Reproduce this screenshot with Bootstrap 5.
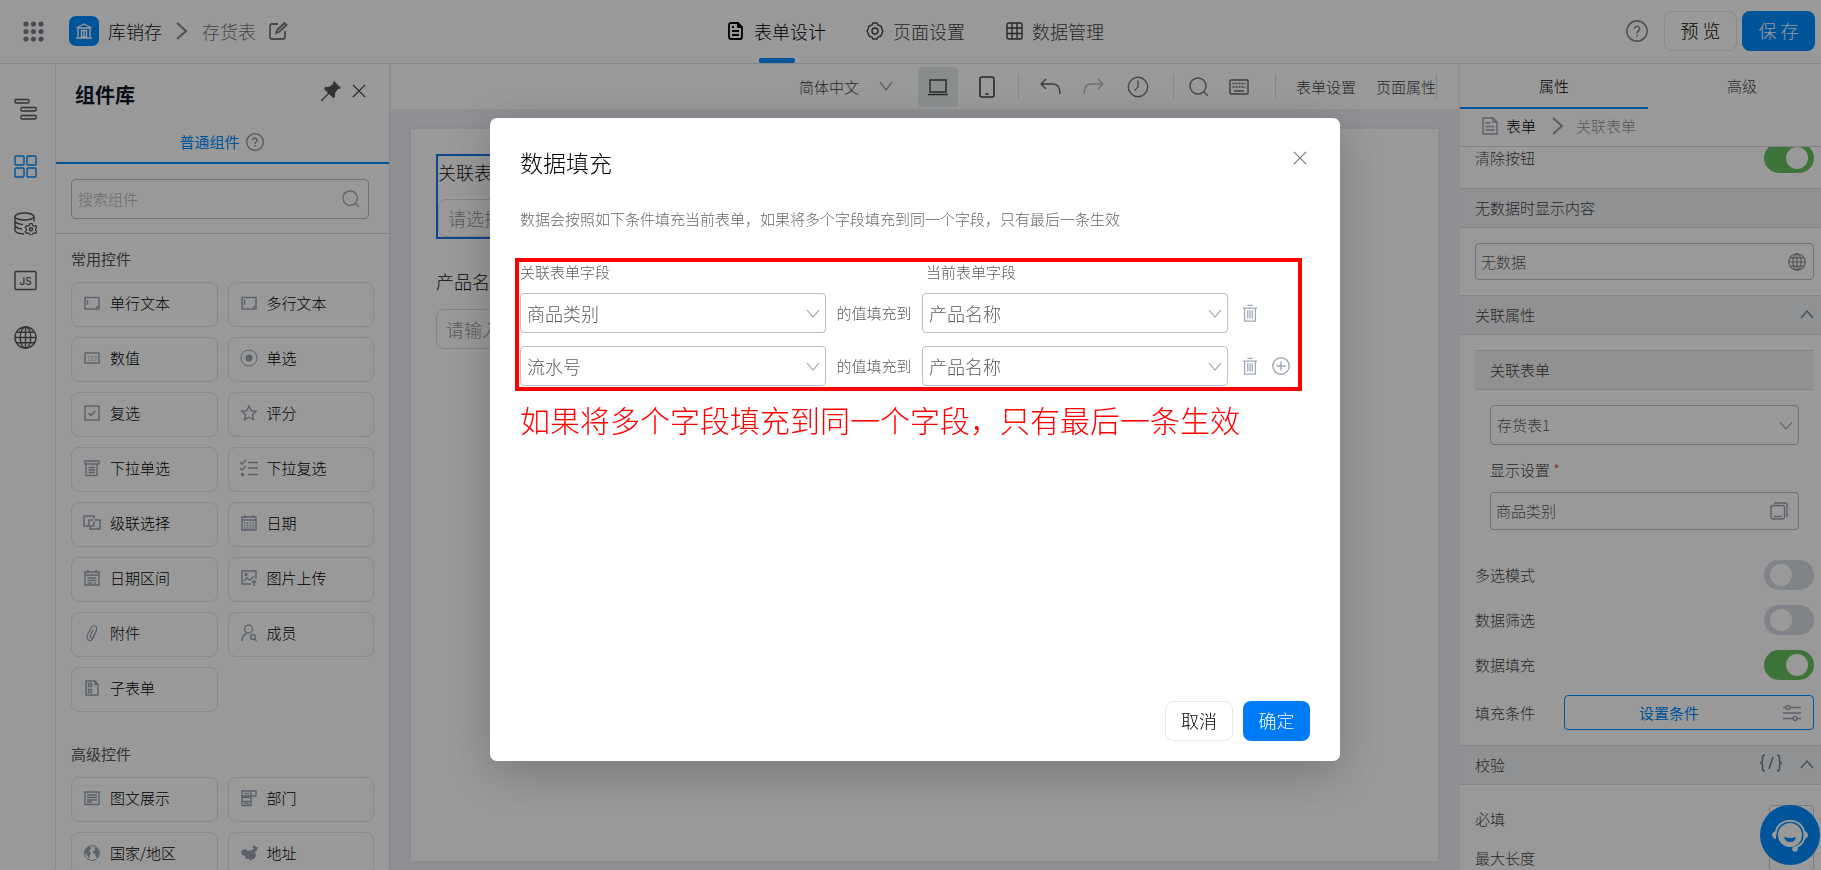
<!DOCTYPE html>
<html lang="zh-CN">
<head>
<meta charset="utf-8">
<meta name="viewport" content="width=device-width, initial-scale=1">
<title>表单设计</title>
<link href="https://cdn.jsdelivr.net/npm/bootstrap@5.3.0/dist/css/bootstrap.min.css" rel="stylesheet">
<style>
:root { --blue: #008cff; --line: #e2e3e5; --field: #b9c0cb; --muted: #5c5c5c; --icon: #9aa3b0; }
body { font-family: "Noto Sans CJK SC", sans-serif; font-size: 15px; line-height: 20px; color: #111; font-weight: 300; stroke-width: 1.4; }
svg { fill: none; stroke: currentColor; flex: none; display: block; }
.t18 { font-size: 18px; line-height: 24px; }
.btn { --bs-btn-font-weight: 300; font-size: 18px; line-height: 24px; height: 40px; border-radius: 8px; padding: 0 0 2px; }
.btn-bare { background: none; border: 0; padding: 0; color: inherit; font-weight: 300; }
.btn-line { border: 1px solid #e6e6e6; color: #000; background: #fff; }
.btn-top { width: 73px; }
.btn-blue { background: var(--blue); color: #fff; }
a { color: inherit; text-decoration: none; }
.app { height: 100vh; overflow: hidden; }
.topbar { height: 64px; border-bottom: 1px solid var(--line); padding: 0 6px 2px 21px; }
.topbar .side { flex: 1 1 0; }
.logo { width: 30px; height: 30px; border-radius: 7px; background: var(--blue); color: #fff; }
.crumb-gap { margin-left: 14px; }
.main-nav { gap: 40px; height: 61px; padding-right: 5px; }
.main-nav a { color: #444; height: 61px; gap: 9px; position: relative; }
.main-nav a.active { color: #000; }
.main-nav a.active::after { content: ""; position: absolute; bottom: -2px; left: calc(50% - 18px); width: 36px; height: 5px; border-radius: 2px; background: var(--blue); }
.rail { width: 56px; border-right: 1px solid #dfe2e6; padding: 34px 4px 0 0; gap: 34px; color: #555; }
.rail .on { color: var(--blue); }
.library { width: 333px; }
.library h2 { font-size: 20px; line-height: 28px; font-weight: 700; color: #10182c; }
.library-head { height: 62px; padding: 0 23px 0 19px; }
.lib-tab { height: 38px; border-bottom: 2px solid var(--blue); color: var(--blue); gap: 6px; padding-right: 2px; font-weight: 400; }
.search-wrap { padding: 15px 20px 14px 15px; border-bottom: 1px solid #dcdcdc; }
.field { border: 1px solid var(--field); border-radius: 4px; background-color: #fff; color: var(--muted); font-weight: 300; font-size: 15px; line-height: 20px; box-shadow: none; }
.field input { border: 0; outline: 0; background: none; color: inherit; font: inherit; padding: 0; min-width: 0; flex: 1; }
.field input::placeholder { color: #b0b6c0; opacity: 1; }
.parts { padding: 0 15px; }
.parts h3 { font-size: 15px; line-height: 20px; font-weight: 400; color: #555; margin: 0 0 13px; }
.part-grid { display: grid; grid-template-columns: 1fr 1fr; gap: 10px; }
.part { height: 45px; border: 1px solid #e2e4e6; border-radius: 8px; background: #fff; padding: 0 0 3px 11px; gap: 9px; color: #000; font-weight: 300; text-align: left; }
.part svg { color: var(--icon); }
.stage { background: #eef0f5; border-left: 2px solid #e6e8ec; }
.toolbar { height: 45px; background: #fff; color: #444; padding-right: 21px; border-right: 2px solid #eee; }
.tool { width: 40px; height: 40px; border-radius: 4px; display: flex; align-items: center; justify-content: center; }
.tool.on { background: #e7eced; }
.vr-line { width: 1px; height: 25px; background: #e0e0e0; }
.paper { margin: 20px 22px 9px 20px; background: #fff; box-shadow: 0 0 4px #dfe2ea; padding: 25px; }
.picked { border: 2px solid #1677ee; padding-top: 4px; margin-bottom: 30px; }
.picked .blank-field { height: 38px; }
.blank-field { height: 40px; border: 1px solid #dedede; border-radius: 8px; padding: 0 9px; width: 100%; font-size: 18px; font-weight: 300; background: #fff; }
.blank-field::placeholder { color: #999; opacity: 1; }
.props { width: 361px; color: #444; }
.props-tab { width: 188px; height: 45px; flex: none; border-bottom: 2px solid transparent; color: #444; }
.props-tab.active { color: #000; border-bottom: 2px solid var(--blue); }
.crumb { height: 38px; border-bottom: 1px solid #dcdcdc; padding: 0 0 3px 22px; }
.sect { height: 40px; background: #f0f2f5; border: solid #dcdee2; border-width: 1px 0; padding: 0 7px 0 15px; }
.row-line { padding: 0 7px 0 15px; }
.form-switch .form-check-input { width: 50px; height: 30px; margin: 0; border: 0; box-shadow: none; background-color: #d5dae3; background-size: 22px 22px; background-position: 6px center; transition: none;
  background-image: url("data:image/svg+xml,%3Csvg xmlns='http://www.w3.org/2000/svg' viewBox='0 0 22 22'%3E%3Ccircle cx='11' cy='11' r='11' fill='%23fff'/%3E%3C/svg%3E"); }
.form-switch .form-check-input:checked { background-color: #67c25f; background-position: 22px center; }
.sel { height: 40px; background-image: url("data:image/svg+xml,%3Csvg xmlns='http://www.w3.org/2000/svg' viewBox='0 0 14 14' fill='none' stroke='%23999'%3E%3Cpath d='M1 4l6 7 6-7' stroke-width='1.1'/%3E%3C/svg%3E"); background-size: 14px 14px; background-position: right 5px center; background-repeat: no-repeat; padding: 0 24px 1px 6px; }
.corner { width: 45px; height: 27px; border: 1px solid #ccd; border-radius: 3px; }
.chat { position: fixed; right: 1px; bottom: 5px; width: 60px; height: 60px; background: var(--blue); color: #fff; border: 0; border-radius: 50%; padding: 0; z-index: 10; display: flex; align-items: center; justify-content: center; }
.modal-backdrop { --bs-backdrop-opacity: .4; }
.modal { padding-left: 9px; }
.modal-dialog { max-width: 850px; margin: 118px auto 0; }
.modal-content { border: 0; border-radius: 7px; min-height: 643px; padding: 20px 30px; box-shadow: 0 12px 48px rgba(0,0,0,.22); color: #111; }
.modal-title { font-size: 23px; line-height: 32px; font-weight: 300; color: #000; }
.fill-box { border: 4px solid #f00; margin: 0 8px 0 -5px; padding: 0 1px 1px; color: var(--muted); }
.fill-row { margin-bottom: 13px; }
.fill-row:last-child { margin-bottom: 0; }
.fill-row .sel { width: 306px; font-size: 18px; line-height: 24px; flex: none; }
.fill-row .btn-bare { color: #9fa8b6; margin-left: 14px; }
.mid-label { width: 96px; text-align: center; flex: none; }
.note { font-size: 30px; line-height: 40px; color: #f00; font-weight: 300; }
</style>
</head>
<body>
<svg width="0" height="0" class="position-absolute" aria-hidden="true">
  <symbol id="question" viewBox="0 0 20 20"><circle cx="10" cy="10" r="9.2"/><path d="M7.6 8a2.4 2.4 0 1 1 3.8 2c-1 .7-1.4 1-1.4 2M10 13.4v1.6"/></symbol>
  <symbol id="magnifier" viewBox="0 0 20 20"><circle cx="9" cy="9" r="8"/><path d="M14.8 14.8l4 4"/></symbol>
  <symbol id="globe" viewBox="0 0 24 24"><circle cx="12" cy="12" r="11"/><ellipse cx="12" cy="12" rx="5.5" ry="11"/><path d="M12 1v22M1 12h22M3 6.5h18M3 17.5h18"/></symbol>
  <symbol id="cross" viewBox="0 0 16 16"><path d="M1 1l14 14M15 1L1 15"/></symbol>
  <symbol id="up" viewBox="0 0 14 14"><path d="M1 10l6-7 6 7"/></symbol>
  <symbol id="right" viewBox="0 0 12 18"><path d="M1 1l9 8-9 8"/></symbol>
  <symbol id="trash" viewBox="0 0 16 20"><path d="M0 4.5h16M5 1.5h6M2 4.5V19h12V4.5M5.500 7v9M8 7v9M10.500 7v9"/></symbol>
</svg>

<div class="app d-flex flex-column">
  <header class="topbar d-flex align-items-center flex-shrink-0">
    <div class="side d-flex align-items-center t18">
      <svg width="24" height="24" viewBox="0 0 24 24" style="color:#7a8088"><g fill="currentColor" stroke="none"><circle cx="5" cy="5" r="2.600"/><circle cx="12.500" cy="5" r="2.600"/><circle cx="20" cy="5" r="2.600"/><circle cx="5" cy="12.500" r="2.600"/><circle cx="12.500" cy="12.500" r="2.600"/><circle cx="20" cy="12.500" r="2.600"/><circle cx="5" cy="20" r="2.600"/><circle cx="12.500" cy="20" r="2.600"/><circle cx="20" cy="20" r="2.600"/></g></svg>
      <span class="logo d-flex align-items-center justify-content-center ms-4"><svg width="18" height="18" viewBox="0 0 18 18"><path d="M1.500 6L9 2l7.500 4zM3 7v8M15 7v8M1 16h16M6.500 8.500h5V15h-5zM9 8.500V15"/></svg></span>
      <span style="margin-left:9px">库销存</span>
      <svg class="crumb-gap" width="12" height="18" stroke-width="2" style="color:#7f858d"><use href="#right"/></svg>
      <span class="crumb-gap" style="color:#777">存货表</span>
      <button class="btn-bare ms-2 ps-1" aria-label="编辑" style="color:#777"><svg width="20" height="20" viewBox="0 0 20 20" stroke-width="1.800"><path d="M10 3H4Q2 3 2 5v11q0 2 2 2h11q2 0 2-2v-6M8 12l1-3 7.500-7 2 2L11 11z"/></svg></button>
    </div>
    <nav class="main-nav d-flex t18">
      <a href="#" class="active d-flex align-items-center"><svg width="18" height="18" viewBox="0 0 18 18" stroke-width="1.800"><path d="M2 3q0-2 2-2h7l4 4v10q0 2-2 2H4q-2 0-2-2zM5 9h7M5 13h7M5 5h2M11 1v4h4"/></svg>表单设计</a>
      <a href="#" class="d-flex align-items-center"><svg width="18" height="18" viewBox="0 0 18 18"><path d="M7 1h4l1 2 3 1 1 3 1 2-1 2-1 3-3 1-1 2H7l-1-2-3-1-1-3-1-2 1-2 1-3 3-1z"/><circle cx="9" cy="9" r="3"/></svg>页面设置</a>
      <a href="#" class="d-flex align-items-center"><svg width="18" height="18" viewBox="0 0 18 18"><rect x="2" y="1" width="15" height="16" rx="2"/><path d="M2 6h15M2 11.500h15M7 1v16M12 1v16"/></svg>数据管理</a>
    </nav>
    <div class="side d-flex align-items-center justify-content-end">
      <button class="btn-bare" aria-label="帮助" style="color:#888"><svg width="22" height="22"><use href="#question"/></svg></button>
      <button class="btn btn-line btn-top ms-3">预 览</button>
      <button class="btn btn-blue btn-top" style="margin-left:5px">保 存</button>
    </div>
  </header>

  <div class="d-flex flex-fill" style="min-height:0">
    <aside class="rail d-flex flex-column align-items-center flex-shrink-0">
      <svg width="23" height="23" viewBox="0 0 23 23"><rect x="1" y="1.500" width="14" height="3.500" rx="1"/><rect x="7" y="9.500" width="15" height="3.500" rx="1"/><rect x="7" y="17.500" width="15" height="3.500" rx="1"/></svg>
      <svg class="on" width="23" height="23" viewBox="0 0 23 23"><rect x="1" y="1" width="9" height="9" rx="1"/><rect x="13" y="1" width="9" height="9" rx="1"/><rect x="1" y="13" width="9" height="9" rx="1"/><rect x="13" y="13" width="9" height="9" rx="1"/></svg>
      <svg width="23" height="23" viewBox="0 0 23 23"><ellipse cx="10.500" cy="4.500" rx="9.500" ry="3.500"/><path d="M1 4.500v14q1 3 9 3.500M20 4.500v5M1 9.500q2 2.500 8 3M1 14q2 2.500 7 3"/><path stroke-width="1.200" d="M16 11.500h2l.6 1.800 1.400.7 1.800-.4 1 1.800-1.300 1.300v1.600l1.300 1.300-1 1.800-1.800-.4-1.400.7-.6 1.300h-2l-.6-1.300-1.400-.7-1.800.4-1-1.800 1.300-1.300v-1.600l-1.300-1.300 1-1.800 1.800.4 1.400-.7z"/><circle cx="17" cy="17.300" r="1.500"/></svg>
      <svg width="23" height="23" viewBox="0 0 23 23"><rect x="1" y="2.500" width="21" height="18" rx="1"/><text x="11.500" y="15.500" text-anchor="middle" font-size="10" font-family="Inter" font-weight="500" fill="currentColor" stroke="none">JS</text></svg>
      <svg width="23" height="23"><use href="#globe"/></svg>
    </aside>

    <aside class="library flex-shrink-0 overflow-hidden">
      <div class="library-head d-flex align-items-center">
        <h2 class="m-0 flex-fill">组件库</h2>
        <button class="btn-bare pb-2" aria-label="固定" style="color:#555"><svg width="20" height="20" viewBox="0 0 20 20"><path fill="currentColor" stroke="none" d="M13 0l7 7-2 1-1 0-3 4 0 4-2 1-4-4-7 7-1 0 0-1 7-7-4-4 1-2 4 0 4-3 0-1z"/></svg></button>
        <button class="btn-bare pb-2" aria-label="关闭" style="margin-left:11px;color:#444"><svg width="14" height="14" stroke-width="1.600"><use href="#cross"/></svg></button>
      </div>
      <div class="lib-tab d-flex justify-content-center align-items-center pb-1">普通组件 <svg width="18" height="18" style="color:#888"><use href="#question"/></svg></div>
      <div class="search-wrap">
        <label class="field d-flex align-items-center" style="height:40px;padding:0 8px 0 6px">
          <input type="search" placeholder="搜索组件" aria-label="搜索组件">
          <svg width="18" height="18" style="color:var(--icon)"><use href="#magnifier"/></svg>
        </label>
      </div>
      <section class="parts" style="padding-top:15px">
        <h3>常用控件</h3>
        <div class="part-grid">
          <button class="part d-flex align-items-center"><svg width="18" height="18" viewBox="0 0 18 18"><rect x="2" y="3.500" width="14" height="11.500"/><path d="M4.500 6v5M13 14l2-2"/></svg>单行文本</button>
          <button class="part d-flex align-items-center"><svg width="18" height="18" viewBox="0 0 18 18"><rect x="2" y="3.500" width="14" height="11.500"/><path d="M4.500 6v5M13 14l2-2"/></svg>多行文本</button>
          <button class="part d-flex align-items-center"><svg width="18" height="18" viewBox="0 0 18 18"><rect x="2" y="4" width="14" height="10"/><text x="9" y="11.500" text-anchor="middle" font-size="6" font-family="Inter" fill="currentColor" stroke="none">123</text></svg>数值</button>
          <button class="part d-flex align-items-center"><svg width="18" height="18" viewBox="0 0 18 18"><circle cx="9" cy="9" r="8" stroke-width="1"/><circle cx="9" cy="9" r="3.500" fill="currentColor" stroke="none"/></svg>单选</button>
          <button class="part d-flex align-items-center"><svg width="18" height="18" viewBox="0 0 18 18"><rect x="2" y="2" width="14" height="14"/><path d="M5.500 9l2.500 2.500L12.500 7"/></svg>复选</button>
          <button class="part d-flex align-items-center"><svg width="18" height="18" viewBox="0 0 18 18"><path d="M9 2l2.200 4.600 5 .6-3.700 3.400 1 5L9 13.200l-4.500 2.400 1-5L1.800 7.200l5-.6z"/></svg>评分</button>
          <button class="part d-flex align-items-center"><svg width="18" height="18" viewBox="0 0 18 18"><path d="M2 2h14v3H2zM3 5v11.500h11V5M5.500 8.500h6.500M5.500 11h6.500M5.500 13.500h6.500"/></svg>下拉单选</button>
          <button class="part d-flex align-items-center"><svg width="18" height="18" viewBox="0 0 18 18"><path d="M0 3l2 2 4-4M0 9l2 2 4-4M8 3.500h10M8 9h10M8 15.500h10"/><path d="M1 14h3v3H1z" fill="currentColor" stroke="none"/></svg>下拉复选</button>
          <button class="part d-flex align-items-center"><svg width="18" height="18" viewBox="0 0 18 18"><path d="M5 12H1V2h10v3M8 12H6V6h4M12 6h5v9H7v-3M11 7v5H8"/></svg>级联选择</button>
          <button class="part d-flex align-items-center"><svg width="18" height="18" viewBox="0 0 18 18"><path d="M2 3h14v13H2zM2 6h14M5 1v3M13 1v3"/><path d="M4 9h10M4 11.500h10M4 14h10" stroke-dasharray="1.500 1.300"/></svg>日期</button>
          <button class="part d-flex align-items-center"><svg width="18" height="18" viewBox="0 0 18 18"><path d="M2 3h14v13H2zM2 6h14M5 1v3M13 1v3M4.500 9h9M4.500 11.500h9M4.500 14h5M11 14h2"/></svg>日期区间</button>
          <button class="part d-flex align-items-center"><svg width="18" height="18" viewBox="0 0 18 18"><path d="M11 15H2V2h14v8M4 12l3-3 3 2 4-4M14 17v-5M12 13.500l2-2 2 2"/><circle cx="6" cy="5.500" r="1"/></svg>图片上传</button>
          <button class="part d-flex align-items-center"><svg width="18" height="18" viewBox="0 0 18 18" stroke-width="1.200"><path d="M13.500 7l-3.500 7.500q-2 3-4.500 1.500T4.500 11L8 4q1.500-3 4-2t1.500 4l-3.500 7q-1 1.500-2 .8T7.500 11.500L10 6"/></svg>附件</button>
          <button class="part d-flex align-items-center"><svg width="18" height="18" viewBox="0 0 18 18"><circle cx="8.500" cy="5" r="4"/><path d="M2 17q0-6 5-7.500M14.500 15l2 2"/><circle cx="13" cy="13" r="2.500"/></svg>成员</button>
          <button class="part d-flex align-items-center"><svg width="18" height="18" viewBox="0 0 18 18"><path d="M3 2h9l3 3.500V16H3zM12 2v3.500h3M5.500 4.500h3v3h-3zM5.500 10.500h3v3h-3z"/></svg>子表单</button>
        </div>
      </section>
      <section class="parts" style="padding-top:32px">
        <h3>高级控件</h3>
        <div class="part-grid">
          <button class="part d-flex align-items-center"><svg width="18" height="18" viewBox="0 0 18 18"><path d="M2 3h14v12.500H2zM4 6h10M4 8.500h10M4 11h10M4 13h5"/></svg>图文展示</button>
          <button class="part d-flex align-items-center"><svg width="18" height="18" viewBox="0 0 18 18"><path d="M2 2h14v5h-5v9.500H2zM11 2v5M2 7h9M2 8.500h9M2 12.500h9M4 4.500h5M4 14.500h5"/></svg>部门</button>
          <button class="part d-flex align-items-center"><svg width="18" height="18" viewBox="0 0 18 18" stroke-width="1"><circle cx="9" cy="9" r="7.500"/><path fill="currentColor" stroke="none" d="M2 6l3-3 3 0 0 2-2 2 2 2-1 2-1 4-2-4-2-2zM11 3l4 2 1 4-1 4-2 0-1-3-2-1 0-2 2-1z"/></svg>国家/地区</button>
          <button class="part d-flex align-items-center"><svg width="18" height="18" viewBox="0 0 18 18"><path fill="currentColor" stroke="none" d="M1 7l4-2 3 2 4-1 2-2-2-1 2-2 2 2 2 0-1 3-2 2 1 4-2 3-2 0-1 2-2-2-3 0-1-3-3-1z"/></svg>地址</button>
        </div>
      </section>
    </aside>

    <main class="stage flex-fill d-flex flex-column" style="min-width:0">
      <div class="toolbar d-flex align-items-center justify-content-end flex-shrink-0">
        <span>简体中文</span>
        <svg class="ms-3" width="22" height="14" viewBox="0 0 22 14" stroke-width="1.200" style="color:#888"><path d="M5 2l6 8 6-8"/></svg>
        <button class="btn-bare tool on" style="margin-left:21px" aria-label="电脑"><svg width="22" height="18" viewBox="0 0 22 18"><path d="M3 2h16v12H3zM1 16.500h20"/></svg></button>
        <button class="btn-bare tool" style="margin-left:9px" aria-label="手机"><svg width="18" height="22" viewBox="0 0 18 22" stroke-width="1.600"><rect x="2" y="1" width="14" height="20" rx="2"/><path d="M7.500 18h3"/></svg></button>
        <span class="vr-line" style="margin:0 11px"></span>
        <button class="btn-bare tool" style="color:#666" aria-label="撤销"><svg width="22" height="18" viewBox="0 0 22 18"><path d="M7 1L2 6l5 5M2 6h12q7 0 7 10"/></svg></button>
        <button class="btn-bare tool ms-1" style="color:#bbb" aria-label="重做"><svg width="22" height="18" viewBox="0 0 22 18"><path d="M15 1l5 5-5 5M20 6H8q-7 0-7 10"/></svg></button>
        <button class="btn-bare tool ms-1" style="color:#777" aria-label="历史"><svg width="22" height="22" viewBox="0 0 22 22"><circle cx="11" cy="11" r="9.700"/><path d="M11 4.500V11l-3.500 3.500"/></svg></button>
        <span class="vr-line" style="margin:0 5px 0 15px"></span>
        <button class="btn-bare tool" style="color:#777" aria-label="搜索"><svg width="20" height="20"><use href="#magnifier"/></svg></button>
        <button class="btn-bare tool" style="color:#666" aria-label="键盘"><svg width="20" height="16" viewBox="0 0 20 16"><rect x="1" y="1" width="18" height="14" rx="1"/><path d="M3.500 4.500h13M3.500 8h13" stroke-dasharray="2 1"/><path d="M5 12h10"/></svg></button>
        <span class="vr-line mx-3"></span>
        <button class="btn-bare ms-1">表单设置</button>
        <button class="btn-bare ms-3 ps-1">页面属性</button>
        <span class="vr-line"></span>
      </div>
      <div class="paper flex-fill">
        <div class="row">
          <div class="col-6">
            <div class="picked">
              <label class="t18 d-block" style="margin-bottom:15px" for="rel">关联表单</label>
              <input id="rel" class="blank-field d-block" placeholder="请选择">
            </div>
            <label class="t18 d-block mb-3" for="pname">产品名称</label>
            <input id="pname" class="blank-field d-block" placeholder="请输入">
          </div>
        </div>
      </div>
    </main>

    <aside class="props flex-shrink-0 overflow-hidden d-flex flex-column">
      <div class="d-flex flex-shrink-0">
        <button class="btn-bare props-tab active">属性</button>
        <button class="btn-bare props-tab">高级</button>
      </div>
      <div class="crumb d-flex align-items-center flex-shrink-0">
        <svg width="16" height="18" viewBox="0 0 16 18" style="color:var(--icon)"><path d="M1 1h10l4 4v12H1zM11 1v4h4M3.500 6h5M3.500 9.500h9M3.500 13h9"/></svg>
        <span class="text-black ms-2">表单</span>
        <svg class="ms-3" width="12" height="18" stroke-width="2" style="color:#999"><use href="#right"/></svg>
        <span style="color:#999;margin-left:12px">关联表单</span>
      </div>
      <div class="overflow-hidden flex-fill d-flex flex-column">
        <div class="row-line form-switch d-flex justify-content-between align-items-center flex-shrink-0" style="margin:-4px 0 15px"><label for="s1">清除按钮</label><input id="s1" class="form-check-input" type="checkbox" role="switch" checked></div>
        <div class="sect d-flex align-items-center flex-shrink-0">无数据时显示内容</div>
        <div class="row-line flex-shrink-0" style="padding-top:15px;padding-bottom:15px">
          <label class="field d-flex align-items-center" style="height:37px;padding:0 7px 0 5px"><input value="无数据" aria-label="无数据时显示内容"><svg width="18" height="18" style="color:#888"><use href="#globe"/></svg></label>
        </div>
        <div class="sect d-flex align-items-center justify-content-between flex-shrink-0">关联属性 <svg width="14" height="14" style="color:#77809a"><use href="#up"/></svg></div>
        <div class="row-line flex-shrink-0" style="padding-top:15px">
          <div class="sect d-flex align-items-center" style="margin-bottom:15px">关联表单</div>
          <div style="margin:0 15px">
            <select class="form-select field sel" aria-label="关联表单"><option>存货表1</option></select>
            <label for="disp" class="d-block" style="margin:15px 0 12px">显示设置 <span style="color:#e94030">*</span></label>
            <div class="field d-flex align-items-center" style="height:38px;padding:0 10px 0 5px"><input id="disp" value="商品类别"><svg width="18" height="18" viewBox="0 0 18 18" style="color:var(--icon)"><rect x="1" y="3.500" width="13.500" height="13.500" rx="2"/><path d="M4 1h11q2 0 2 2v12M4 14.500h8"/></svg></div>
          </div>
        </div>
        <div class="row-line form-switch d-flex justify-content-between align-items-center flex-shrink-0" style="margin-top:30px"><label for="s2">多选模式</label><input id="s2" class="form-check-input" type="checkbox" role="switch"></div>
        <div class="row-line form-switch d-flex justify-content-between align-items-center flex-shrink-0" style="margin-top:15px"><label for="s3">数据筛选</label><input id="s3" class="form-check-input" type="checkbox" role="switch"></div>
        <div class="row-line form-switch d-flex justify-content-between align-items-center flex-shrink-0" style="margin-top:15px"><label for="s4">数据填充</label><input id="s4" class="form-check-input" type="checkbox" role="switch" checked></div>
        <div class="row-line d-flex align-items-center flex-shrink-0" style="margin:15px 0"><span class="flex-fill">填充条件</span>
          <button class="field d-flex align-items-center px-2" style="width:250px;height:35px;border-color:var(--blue);color:var(--blue)"><span class="flex-fill fw-normal">设置条件</span><svg class="me-1" width="18" height="16" viewBox="0 0 18 16" style="color:var(--icon);margin-left:18px"><path d="M0 2.500h3M7 2.500h11M0 8h18M0 13.500h10M14 13.500h4"/><circle cx="5" cy="2.500" r="2"/><circle cx="12" cy="13.500" r="2"/></svg></button></div>
        <div class="sect d-flex align-items-center flex-shrink-0"><span class="flex-fill">校验</span><svg class="mb-1" width="24" height="18" viewBox="0 0 24 18" style="color:#77809a" stroke-width="1.600"><path d="M6 1Q3.500 1 3.500 3.500V6.500Q3.500 9 1 9Q3.500 9 3.500 11.500V14.500Q3.500 17 6 17M18 1q2.500 0 2.500 2.500V6.500Q20.500 9 23 9Q20.500 9 20.500 11.500V14.500Q20.500 17 18 17M14 3L10 15"/></svg><svg style="color:#77809a;margin-left:17px" width="14" height="14"><use href="#up"/></svg></div>
        <div class="row-line d-flex align-items-center justify-content-between flex-shrink-0" style="margin-top:20px"><span>必填</span><span class="corner"></span></div>
        <div class="row-line d-flex align-items-center justify-content-between flex-shrink-0" style="margin-top:12px"><span>最大长度</span><span class="corner"></span></div>
      </div>
    </aside>
  </div>
</div>
<button class="chat" aria-label="在线客服"><svg width="36" height="36" viewBox="0 0 36 36" stroke-width="2"><circle cx="18" cy="18" r="12" fill="currentColor" stroke="none"/><path d="M3.500 18C4-1 32-1 32.500 18q0 9-8 12"/><path d="M4 14v8q-4-1-4-4t4-4zM32 14v8q4-1 4-4t-4-4z" fill="currentColor" stroke="none"/><circle cx="23" cy="32" r="2.800" fill="currentColor" stroke="none"/><path d="M12 20q6 2 12 0-1 5-6 5t-6-5z" fill="#008cff" stroke="none"/></svg></button>

<div class="modal-backdrop show"></div>
<div class="modal d-block" tabindex="-1" role="dialog" aria-labelledby="dlg-title">
  <div class="modal-dialog">
    <div class="modal-content">
      <div class="d-flex justify-content-between" style="margin-top:8px;margin-bottom:31px">
        <h1 class="modal-title" id="dlg-title">数据填充</h1>
        <button class="btn-bare align-self-start" aria-label="关闭" style="color:#777;margin:5px 3px 0 0"><svg width="14" height="14"><use href="#cross"/></svg></button>
      </div>
      <p style="color:#666;margin-bottom:29px">数据会按照如下条件填充当前表单，如果将多个字段填充到同一个字段，只有最后一条生效</p>
      <div class="fill-box">
        <div class="d-flex" style="margin-bottom:11px"><span style="width:406px">关联表单字段</span><span>当前表单字段</span></div>
        <div class="fill-row d-flex align-items-center">
          <select class="form-select field sel" aria-label="关联表单字段"><option>商品类别</option></select>
          <span class="mid-label">的值填充到</span>
          <select class="form-select field sel" aria-label="当前表单字段"><option>产品名称</option></select>
          <button class="btn-bare" aria-label="删除"><svg width="16" height="18"><use href="#trash"/></svg></button>
        </div>
        <div class="fill-row d-flex align-items-center">
          <select class="form-select field sel" aria-label="关联表单字段"><option>流水号</option></select>
          <span class="mid-label">的值填充到</span>
          <select class="form-select field sel" aria-label="当前表单字段"><option>产品名称</option></select>
          <button class="btn-bare" aria-label="删除"><svg width="16" height="18"><use href="#trash"/></svg></button>
          <button class="btn-bare" aria-label="添加"><svg width="18" height="18" viewBox="0 0 18 18"><circle cx="9" cy="9" r="8.200"/><path d="M9 4.500v9M4.500 9h9"/></svg></button>
        </div>
      </div>
      <p class="note mb-0" style="margin-top:8px">如果将多个字段填充到同一个字段，只有最后一条生效</p>
      <div class="d-flex justify-content-end mt-auto" style="gap:10px">
        <button class="btn btn-line" style="width:68px">取消</button>
        <button class="btn btn-blue" style="width:67px;background:#007bf7">确定</button>
      </div>
    </div>
  </div>
</div>
<script src="https://cdn.jsdelivr.net/npm/bootstrap@5.3.0/dist/js/bootstrap.bundle.min.js"></script>
</body>
</html>
